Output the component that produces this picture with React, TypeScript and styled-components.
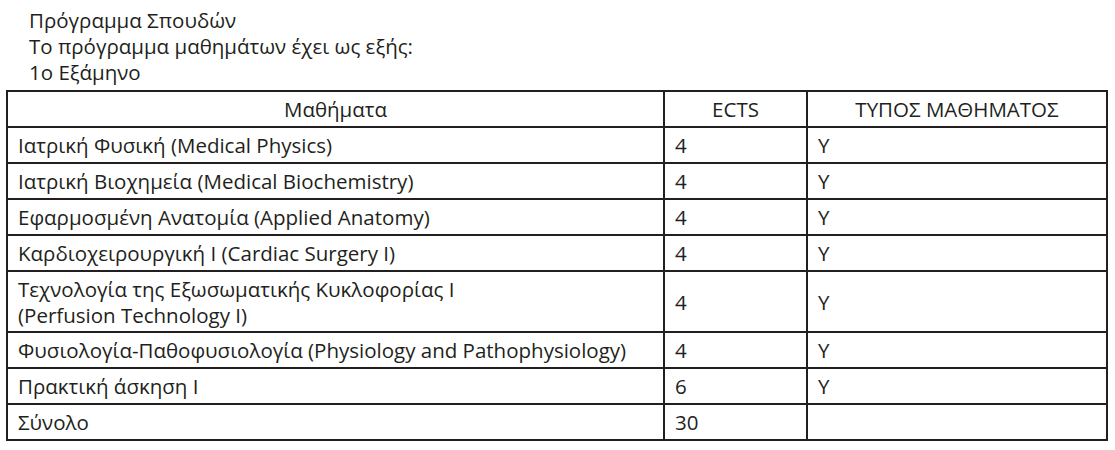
import React from "react";
import styled, { createGlobalStyle } from "styled-components";

const Global = createGlobalStyle`
  html, body { margin: 0; padding: 0; background: #ffffff; }
  body { font-family: "Open Sans", "Noto Sans", sans-serif; color: #231f20; }
`;

const Page = styled.div`
  padding: 7px 10px 0 6px;
  width: 1100px;
`;

const Intro = styled.div`
  padding-left: 23px;
  font-size: 20.5px;
  line-height: 26px;
  margin-bottom: 5px;
`;

const Table = styled.table`
  width: 1100px;
  border-collapse: collapse;
  table-layout: fixed;
  font-size: 20.5px;
  line-height: 26px;
`;

const Col = styled.col<{ $w: number }>`
  width: ${(p) => p.$w}px;
`;

const Th = styled.th`
  border: 2px solid #231f20;
  padding: 4px 10px;
  font-weight: 400;
  text-align: center;
  vertical-align: middle;
  white-space: nowrap;
`;

const Td = styled.td`
  border: 2px solid #231f20;
  padding: 4px 10px 3.9px;
  text-align: left;
  vertical-align: middle;
  white-space: nowrap;
`;

type Row = { name: React.ReactNode; ects: string; type: string };

const rows: Row[] = [
  { name: "Ιατρική Φυσική (Medical Physics)", ects: "4", type: "Υ" },
  { name: "Ιατρική Βιοχημεία (Medical Biochemistry)", ects: "4", type: "Υ" },
  { name: "Εφαρμοσμένη Ανατομία (Applied Anatomy)", ects: "4", type: "Υ" },
  { name: "Καρδιοχειρουργική Ι (Cardiac Surgery I)", ects: "4", type: "Υ" },
  {
    name: (
      <>
        Τεχνολογία της Εξωσωματικής Κυκλοφορίας Ι
        <br />
        (Perfusion Technology I)
      </>
    ),
    ects: "4",
    type: "Υ",
  },
  { name: "Φυσιολογία-Παθοφυσιολογία (Physiology and Pathophysiology)", ects: "4", type: "Υ" },
  { name: "Πρακτική άσκηση Ι", ects: "6", type: "Υ" },
  { name: "Σύνολο", ects: "30", type: "" },
];

export default function App() {
  return (
    <Page>
      <Global />
      <Intro>
        <div>Πρόγραμμα Σπουδών</div>
        <div>Το πρόγραμμα μαθημάτων έχει ως εξής:</div>
        <div>1ο Εξάμηνο</div>
      </Intro>
      <Table>
        <colgroup>
          <Col $w={657} />
          <Col $w={143} />
          <Col $w={300} />
        </colgroup>
        <thead>
          <tr>
            <Th>Μαθήματα</Th>
            <Th>ECTS</Th>
            <Th>ΤΥΠΟΣ ΜΑΘΗΜΑΤΟΣ</Th>
          </tr>
        </thead>
        <tbody>
          {rows.map((r, i) => (
            <tr key={i}>
              <Td>{r.name}</Td>
              <Td>{r.ects}</Td>
              <Td>{r.type}</Td>
            </tr>
          ))}
        </tbody>
      </Table>
    </Page>
  );
}
